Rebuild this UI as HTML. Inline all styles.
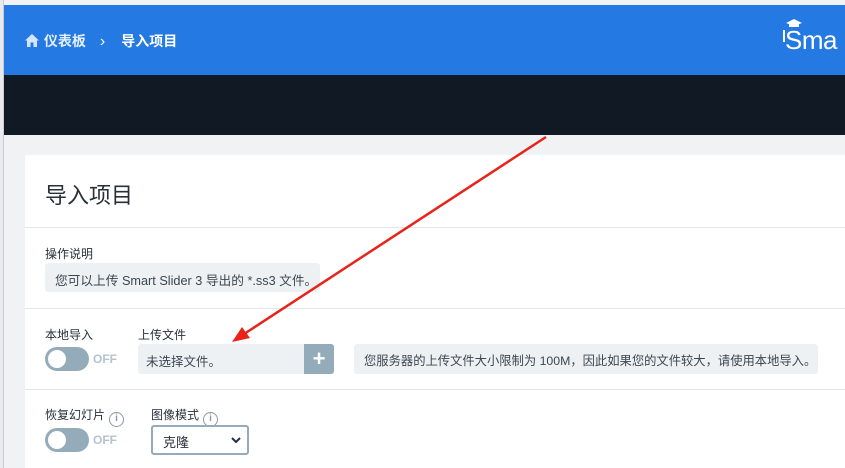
<!DOCTYPE html>
<html><head><meta charset="utf-8"><style>
*{margin:0;padding:0;box-sizing:border-box}
body{width:845px;height:468px;overflow:hidden;background:#f0f2f4;font-family:"Liberation Sans","Noto Sans CJK SC",sans-serif;position:relative}
.a{position:absolute;white-space:nowrap}
.lbl{font-size:12px;color:#283039}
.box{background:#eef1f4;border-radius:3px;font-size:12px;color:#3b4650}
.tog{width:44px;height:24px;border-radius:12px;background:#94abba}
.tog::after{content:"";position:absolute;left:3px;top:3px;width:18px;height:18px;border-radius:50%;background:#fff}
.off{font-size:12px;font-weight:bold;color:#b4c3cd}
.info{display:inline-block;width:15px;height:15px;border:1.5px solid #8a9aa6;border-radius:50%;font-size:10px;line-height:12px;text-align:center;color:#8a9aa6;font-weight:bold;vertical-align:-2px;margin-left:4px}
</style></head><body>
<div class="a" style="left:0;top:0;width:4px;height:468px;background:#e8eaed;border-right:1px solid #c9cdd1"></div>
<div class="a" style="left:4px;top:5px;width:841px;height:70px;background:#2479e2"></div>
<div class="a" style="left:24px;top:31px;color:#fff;font-size:14px;font-weight:bold">
<svg width="16" height="15" viewBox="0 0 16 15" style="vertical-align:-2px"><path d="M8 1L1 7.5h2V14h3.5V9.5h3V14H13V7.5h2z" fill="#d6e6fa"/></svg>
<span style="color:#e6f0fc">仪表板</span><span style="margin:0 16px 0 14px;font-weight:normal;font-size:16px">›</span>导入项目</div>
<div class="a" style="left:785px;top:25px;color:#fff;font-size:26px;letter-spacing:-0.5px">Sma</div>
<svg class="a" style="left:780px;top:18px" width="28" height="30" viewBox="0 0 28 30"><path d="M6 5L14 1l8 4-8 3z" fill="#fff"/><path d="M9 6v3h10V6" fill="#fff"/><rect x="3" y="12" width="2" height="12" fill="#fff"/></svg>
<div class="a" style="left:4px;top:75px;width:841px;height:60px;background:#101924"></div>
<div class="a" style="left:25px;top:155px;width:820px;height:313px;background:#fff"></div>
<div class="a" style="left:45px;top:178px;font-size:22px;color:#283039">导入项目</div>
<div class="a" style="left:25px;top:227px;width:820px;height:1px;background:#e3e6e9"></div>
<div class="a lbl" style="left:45px;top:245px">操作说明</div>
<div class="a box" style="left:45px;top:263px;width:275px;height:29px;padding:7px 10px;font-size:12.7px">您可以上传 Smart Slider 3 导出的 *.ss3 文件。</div>
<div class="a" style="left:25px;top:308px;width:820px;height:1px;background:#e3e6e9"></div>
<div class="a lbl" style="left:45px;top:326px">本地导入</div>
<div class="a tog" style="left:45px;top:347px"></div>
<div class="a off" style="left:93px;top:352px">OFF</div>
<div class="a lbl" style="left:138px;top:326px">上传文件</div>
<div class="a box" style="left:138px;top:344px;width:196px;height:30px;padding:7px 8px;font-size:12.5px">未选择文件。</div>
<div class="a" style="left:304px;top:344px;width:30px;height:30px;background:#94abba;border-radius:0 3px 3px 0;color:#fff;font-size:22px;line-height:30px;text-align:center;font-weight:bold">+</div>
<div class="a box" style="left:354px;top:344px;width:464px;height:30px;padding:7px 10px;font-size:12.3px">您服务器的上传文件大小限制为 100M，因此如果您的文件较大，请使用本地导入。</div>
<div class="a" style="left:25px;top:389px;width:820px;height:1px;background:#e3e6e9"></div>
<div class="a lbl" style="left:45px;top:406px">恢复幻灯片<span class="info">i</span></div>
<div class="a tog" style="left:45px;top:428px"></div>
<div class="a off" style="left:93px;top:433px">OFF</div>
<div class="a lbl" style="left:151px;top:406px">图像模式<span class="info">i</span></div>
<div class="a" style="left:151px;top:425px;width:98px;height:30px;border:2px solid #94abba;border-radius:3px;font-size:13px;color:#283039;padding:5px 10px">克隆
<svg style="position:absolute;right:6px;top:10px" width="10" height="7" viewBox="0 0 10 7"><path d="M1 1l4 4 4-4" fill="none" stroke="#283039" stroke-width="2"/></svg></div>
<svg class="a" style="left:0;top:0" width="845" height="468"><line x1="546" y1="137" x2="244" y2="334" stroke="#e8231a" stroke-width="2.5"/><path d="M232 342L242 327 250 338z" fill="#e8231a"/></svg>
</body></html>
